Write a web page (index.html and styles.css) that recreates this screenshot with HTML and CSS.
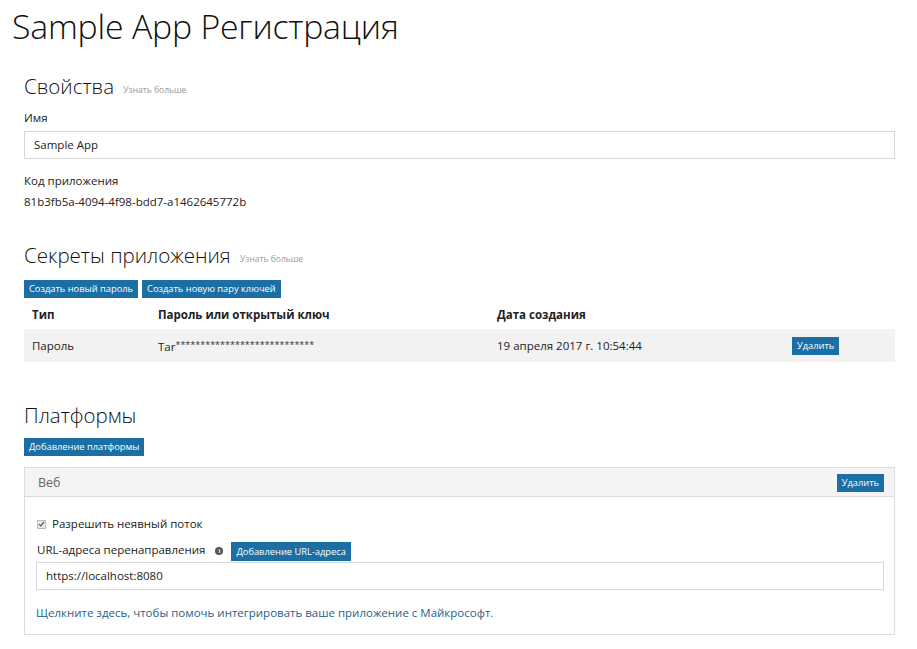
FILE: index.html
```html
<!DOCTYPE html>
<html lang="ru">
<head>
<meta charset="utf-8">
<title>Sample App Регистрация</title>
<link rel="stylesheet" href="styles.css">
</head>
<body>
<div class="page">
  <h1 class="title">Sample App Регистрация</h1>

  <section class="section props">
    <h2 class="section-title">Свойства <a class="more">Узнать больше</a></h2>
    <div class="label">Имя</div>
    <div class="input">Sample App</div>
    <div class="label label-gap">Код приложения</div>
    <div class="value">81b3fb5a-4094-4f98-bdd7-a1462645772b</div>
  </section>

  <section class="section secrets">
    <h2 class="section-title">Секреты приложения <a class="more">Узнать больше</a></h2>
    <div class="btn-row">
      <button class="btn">Создать новый пароль</button>
      <button class="btn">Создать новую пару ключей</button>
    </div>
    <div class="table">
      <div class="tr th">
        <div class="c1">Тип</div>
        <div class="c2">Пароль или открытый ключ</div>
        <div class="c3">Дата создания</div>
        <div class="c4"></div>
      </div>
      <div class="tr td">
        <div class="c1">Пароль</div>
        <div class="c2">Tar<span class="stars">****************************</span></div>
        <div class="c3">19 апреля 2017 г. 10:54:44</div>
        <div class="c4"><button class="btn">Удалить</button></div>
      </div>
    </div>
  </section>

  <section class="section platforms">
    <h2 class="section-title">Платформы</h2>
    <button class="btn">Добавление платформы</button>
    <div class="panel">
      <div class="panel-head">
        <span class="panel-title">Веб</span>
        <button class="btn">Удалить</button>
      </div>
      <div class="panel-body">
        <label class="check"><span class="box"><svg width="8" height="8" viewBox="0 0 8 8"><path d="M1.2 4.2 L3.2 6.2 L6.8 1.6" fill="none" stroke="#555" stroke-width="1.4"/></svg></span>Разрешить неявный поток</label>
        <div class="url-row">
          <span class="url-label">URL-адреса перенаправления</span>
          <span class="info">i</span>
          <button class="btn">Добавление URL-адреса</button>
        </div>
        <div class="input input-url">https://localhost:8080</div>
        <a class="link">Щелкните здесь, чтобы помочь интегрировать ваше приложение с Майкрософт.</a>
      </div>
    </div>
  </section>
</div>
</body>
</html>
```

FILE: styles.css
```css
* { box-sizing: border-box; }
html, body { margin: 0; padding: 0; background: #fff; }
body {
  font-family: "Open Sans", "Noto Sans", sans-serif;
  color: #222;
  font-size: 11.5px;
}
.page {
  padding: 0 22px 0 24px;
}
.title {
  margin: 0 0 0 -12px;
  padding-top: 4px;
  font-weight: 300;
  font-size: 33.8px;
  line-height: 44px;
  color: #111;
  letter-spacing: -0.2px;
}
.section-title {
  margin: 0;
  font-weight: 300;
  font-size: 20.5px;
  line-height: 28px;
  color: #111;
}
.more {
  font-size: 8.5px;
  color: #999;
  font-weight: 400;
  margin-left: 4px;
  vertical-align: 1px;
}
.props { padding-top: 24px; }
.label {
  font-size: 11.5px;
  line-height: 16px;
  margin-top: 6px;
  color: #222;
}
.label-gap { margin-top: 14px; }
.input {
  margin-top: 5px;
  height: 28px;
  border: 1px solid #d6d6d6;
  padding: 0 9px;
  line-height: 26px;
  font-size: 11.5px;
  color: #222;
}
.value {
  margin-top: 5px;
  font-size: 11.5px;
  line-height: 16px;
}
.secrets { padding-top: 31px; }
.btn {
  font-family: inherit;
  background: #1b6fa5;
  color: #fff;
  border: 0;
  margin: 0;
  font-size: 9.3px;
  height: 18px;
  line-height: 18px;
  padding: 0 5px;
  cursor: pointer;
}
.btn-row {
  display: flex;
  gap: 4px;
  margin-top: 7px;
}
.table { margin-top: 1px; }
.tr {
  display: grid;
  grid-template-columns: 126px 339px 295px 1fr;
  align-items: center;
}
.tr > div { padding-left: 8px; }
.th {
  height: 30px;
  font-weight: 700;
  font-size: 11.5px;
}
.td {
  height: 33px;
  background: #f2f2f2;
  font-size: 11.5px;
}
.stars { font-size: 9px; vertical-align: 3px; color: #333; }
.platforms { padding-top: 39px; }
.platforms > .btn { margin-top: 9px; display: block; }
.panel {
  margin-top: 11px;
  border: 1px solid #dcdcdc;
}
.panel-head {
  display: flex;
  justify-content: space-between;
  align-items: center;
  height: 29px;
  background: #f4f4f4;
  border-bottom: 1px solid #dcdcdc;
  padding: 0 10px 0 13px;
}
.panel-head .btn { margin-top: 2px; }
.panel-title {
  font-size: 12.5px;
  color: #666;
}
.panel-body {
  padding: 19px 10px 13px 11px;
}
.check {
  display: flex;
  align-items: center;
  font-size: 11.5px;
  line-height: 16px;
  color: #222;
}
.box {
  width: 9px;
  height: 9px;
  background: #e8e8e8;
  border: 1px solid #bbb;
  margin: 0 6px 0 1px;
  display: inline-flex;
  align-items: center;
  justify-content: center;
}
.url-row {
  display: flex;
  align-items: flex-end;
  margin-top: 9px;
  height: 20px;
}
.url-label {
  font-size: 11.5px;
  line-height: 16px;
  padding-bottom: 3px;
  margin-left: 1px;
}
.info {
  width: 8px;
  height: 8px;
  border-radius: 50%;
  background: #555;
  color: #fff;
  font-size: 6px;
  line-height: 8px;
  font-weight: 700;
  text-align: center;
  margin: 0 8px 6px 10px;
}
.url-row .btn { height: 19px; }
.input-url { margin-top: 1px; }
.link {
  display: block;
  margin-top: 15px;
  color: #1f5f8b;
  font-size: 11.5px;
  line-height: 16px;
}
```
